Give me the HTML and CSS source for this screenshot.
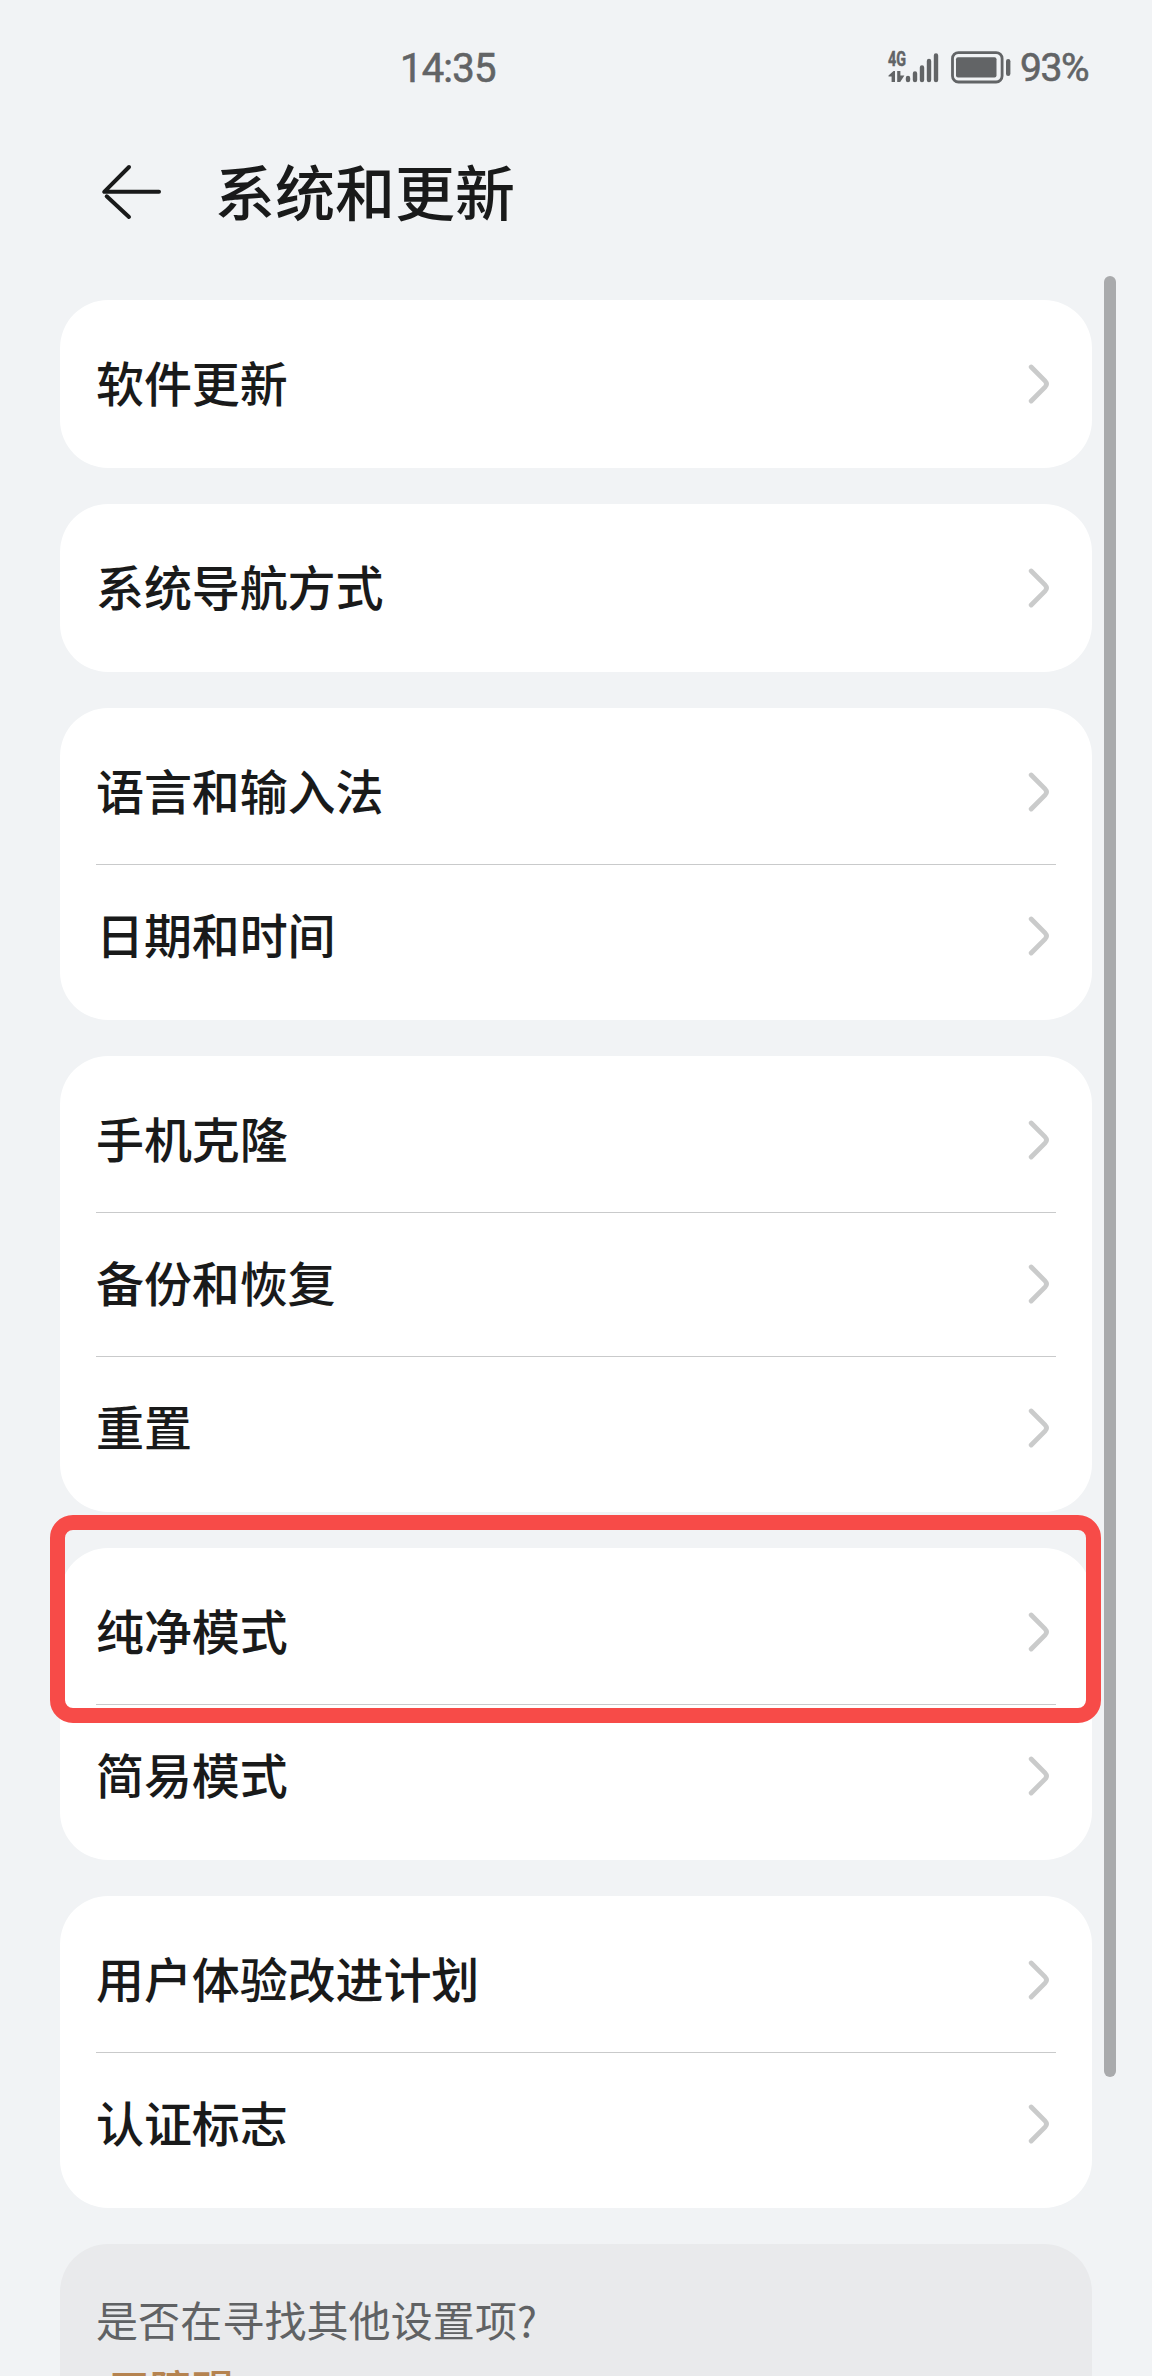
FILE: index.html
```html
<!DOCTYPE html>
<html lang="zh-CN">
<head>
<meta charset="utf-8">
<title>系统和更新</title>
<link rel="stylesheet" href="styles.css">
</head>
<body>
<svg class="defs" aria-hidden="true">
  <symbol id="chevron" viewBox="0 0 24 42"><path d="M4.2 4 L18 17.8 Q21 21 18 24.2 L4.2 38"/></symbol>
</svg>
<div class="screen">
  <header class="status">
    <span class="clock">14:35</span>
    <div class="indicators">
      <svg class="signal" width="52" height="36" viewBox="0 0 52 36">
        <text class="net" x="1" y="15.6" textLength="18" lengthAdjust="spacingAndGlyphs">4G</text>
        <path class="traffic" d="M1.5 25.5 L6.5 21 H8 V32 H4.6 V26.5 H1.5 Z M10.2 21 H13.4 V25.5 H17.4 L13.2 32 H10.2 Z"/>
        <path class="bars" d="M21 28v2 M28 23.5v6.5 M35 17.5v12.5 M42 11v19 M49 5.5v24.5"/>
      </svg>
      <svg class="battery" width="60" height="36" viewBox="0 0 60 36">
        <rect class="shell" x="1.5" y="2.6" width="49.6" height="29.4" rx="6"/>
        <rect class="charge" x="5" y="7.3" width="40.5" height="20.2" rx="2"/>
        <rect class="charge" x="55" y="9" width="4.4" height="17" rx="2.2"/>
      </svg>
      <span class="percent">93%</span>
    </div>
  </header>

  <div class="titlebar">
    <svg class="back" width="64" height="64" viewBox="0 0 64 64">
      <path d="M31 7 L6.2 31.8 H61 M8.7 36.3 L31 57"/>
    </svg>
    <h1>系统和更新</h1>
  </div>

  <main class="list">
    <section class="card">
      <div class="row"><span>软件更新</span><svg class="chevron"><use href="#chevron"/></svg></div>
    </section>
    <section class="card">
      <div class="row"><span>系统导航方式</span><svg class="chevron"><use href="#chevron"/></svg></div>
    </section>
    <section class="card">
      <div class="row"><span>语言和输入法</span><svg class="chevron"><use href="#chevron"/></svg></div>
      <div class="row"><span>日期和时间</span><svg class="chevron"><use href="#chevron"/></svg></div>
    </section>
    <section class="card">
      <div class="row"><span>手机克隆</span><svg class="chevron"><use href="#chevron"/></svg></div>
      <div class="row"><span>备份和恢复</span><svg class="chevron"><use href="#chevron"/></svg></div>
      <div class="row"><span>重置</span><svg class="chevron"><use href="#chevron"/></svg></div>
    </section>
    <section class="card marked">
      <div class="row"><span>纯净模式</span><svg class="chevron"><use href="#chevron"/></svg></div>
      <div class="row"><span>简易模式</span><svg class="chevron"><use href="#chevron"/></svg></div>
      <div class="highlight"></div>
    </section>
    <section class="card">
      <div class="row"><span>用户体验改进计划</span><svg class="chevron"><use href="#chevron"/></svg></div>
      <div class="row"><span>认证标志</span><svg class="chevron"><use href="#chevron"/></svg></div>
    </section>
    <section class="card more">
      <p>是否在寻找其他设置项?</p>
      <a class="link">无障碍</a>
    </section>
  </main>
  <div class="scrollbar"></div>
</div>
</body>
</html>
```

FILE: styles.css
```css
* { box-sizing: border-box; }

body {
  margin: 0;
  background: #f1f3f5;
  font-family: "Noto Sans CJK SC", sans-serif;
  color: #191a1a;
}

.defs { position: absolute; width: 0; height: 0; }

.screen {
  position: relative;
  width: 1152px;
  height: 2376px;
  overflow: hidden;
}

.status {
  display: flex;
  justify-content: space-between;
  align-items: center;
  height: 136px;
  padding: 0 64px 0 400px;
  color: #626466;
  font-family: Roboto, sans-serif;
  font-size: 40px;
}

.clock {
  letter-spacing: -0.8px;
  -webkit-text-stroke: 0.6px #626466;
}

.indicators { display: flex; align-items: center; }

.signal { margin-right: 12px; overflow: visible; }
.battery { margin-right: 9px; }

.percent {
  font-size: 39px;
  letter-spacing: -1.5px;
  -webkit-text-stroke: 0.6px #626466;
}

.net {
  font: 700 20px Roboto, sans-serif;
  fill: #626466;
  stroke: #626466;
  stroke-width: 0.5;
}
.traffic { fill: #626466; }
.bars { fill: none; stroke: #626466; stroke-width: 4.4; stroke-linecap: round; }
.shell { fill: none; stroke: #626466; stroke-width: 2.8; }
.charge { fill: #626466; }

.titlebar {
  display: flex;
  align-items: center;
  gap: 53px;
  height: 112px;
  padding-left: 98px;
}

.back path {
  fill: none;
  stroke: #191a1a;
  stroke-width: 4;
  stroke-linecap: round;
  stroke-linejoin: round;
}

h1 {
  margin: 0 0 4px;
  font-size: 60px;
  font-weight: 500;
  line-height: 88px;
}

.list {
  display: flex;
  flex-direction: column;
  gap: 36px;
  padding: 52px 60px 0;
}

.card {
  padding: 12px 36px;
  border-radius: 48px;
  background: #fff;
}

.row {
  display: flex;
  align-items: center;
  justify-content: space-between;
  height: 144px;
  padding-right: 5px;
  font-size: 48px;
  font-weight: 500;
  line-height: 72px;
}

.row span { margin-bottom: 6px; letter-spacing: -0.1px; }

.row + .row {
  background: linear-gradient(#c9cacb, #c9cacb) top / 100% 1px no-repeat;
}

.chevron {
  width: 24px;
  height: 42px;
  fill: none;
  stroke: #cacbcb;
  stroke-width: 4.8;
  stroke-linecap: round;
}

.marked { position: relative; }

.highlight {
  position: absolute;
  top: -33px;
  left: -10px;
  width: 1051px;
  height: 208px;
  border: 15px solid #f74b48;
  border-radius: 23px;
}

.more {
  height: 300px;
  padding-top: 44px;
  background: #e9eaec;
  font-size: 42px;
  line-height: 62px;
}

.more p { margin: 0; color: #606264; letter-spacing: 0.1px; }

.link {
  display: block;
  margin: 7px 0 0 12px;
  color: #b5834f;
  font-weight: 500;
}

.scrollbar {
  position: absolute;
  top: 276px;
  right: 36px;
  width: 12px;
  height: 1801px;
  border-radius: 6px;
  background: #a9aaac;
}
```
